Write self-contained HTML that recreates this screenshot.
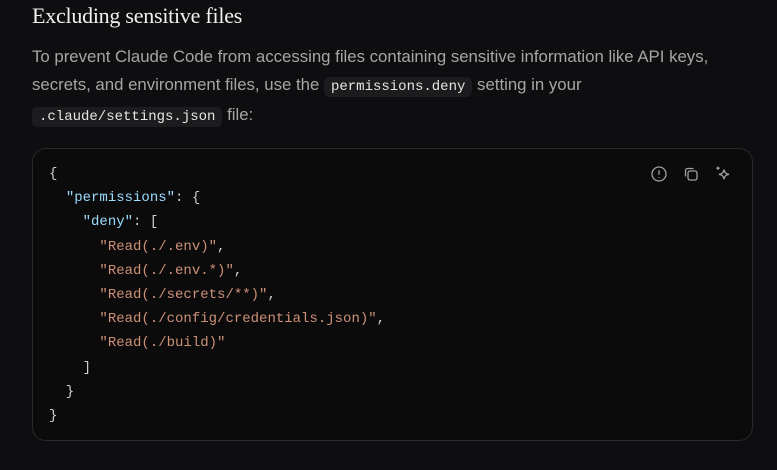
<!DOCTYPE html>
<html><head><meta charset="utf-8"><style>
body{margin:0;width:777px;height:470px;background:#0e0e10;overflow:hidden;font-family:"Liberation Sans",sans-serif;}
h2{position:absolute;left:32px;top:3px;margin:0;font-family:"Liberation Serif",serif;font-weight:normal;font-size:22px;color:#f0f0f0;letter-spacing:-0.25px;}
p{position:absolute;left:32px;top:43px;width:730px;margin:0;font-size:16.8px;line-height:28px;color:#a6a6a6;}
code{font-family:"Liberation Mono",monospace;font-size:14px;background:#1c1c1e;color:#e6e6e6;padding:2px 7px;border-radius:5px;}
.box{position:absolute;left:32px;top:148px;width:721px;height:293px;border:1px solid #2a2a2c;border-radius:14px;background:#0b0b0c;box-sizing:border-box;}
pre{position:absolute;left:16px;top:13px;margin:0;font-family:"Liberation Mono",monospace;font-size:14px;line-height:24.2px;color:#cfcfcf;}
.k{color:#9cdcfe}.s{color:#ce9178}
.ic{position:absolute;top:15px;}
</style></head><body>
<h2>Excluding sensitive files</h2>
<p>To prevent Claude Code from accessing files containing sensitive information like API keys, secrets, and environment files, use the <code>permissions.deny</code> setting in your <code>.claude/settings.json</code> file:</p>
<div class="box">
<pre>{
  <span class="k">"permissions"</span>: {
    <span class="k">"deny"</span>: [
      <span class="s">"Read(./.env)"</span>,
      <span class="s">"Read(./.env.*)"</span>,
      <span class="s">"Read(./secrets/**)"</span>,
      <span class="s">"Read(./config/credentials.json)"</span>,
      <span class="s">"Read(./build)"</span>
    ]
  }
}</pre>
<svg class="ic" style="left:616px" width="20" height="20" viewBox="0 0 20 20" fill="none" stroke="#a0a0a0" stroke-width="1.3"><circle cx="10" cy="10" r="7"/><path d="M10 6.3v4.5M10 13v.7"/></svg>
<svg class="ic" style="left:648px" width="20" height="20" viewBox="0 0 20 20" fill="none" stroke="#a0a0a0" stroke-width="1.3"><rect x="7" y="7" width="9" height="9" rx="2"/><path d="M4.5 12.5V6.5A2 2 0 0 1 6.5 4.5h6"/></svg>
<svg class="ic" style="left:680px" width="20" height="20" viewBox="0 0 20 20" fill="none" stroke="#a0a0a0" stroke-width="1.3"><path d="M11 5.5c.6 3.2 1.7 4.3 5 4.8c-3.3.6-4.4 1.7-5 5c-.6-3.3-1.7-4.4-5-5c3.3-.5 4.4-1.6 5-4.8z"/><path d="M5 2.5v3.4M3.3 4.2h3.4"/></svg>
</div>
</body></html>
